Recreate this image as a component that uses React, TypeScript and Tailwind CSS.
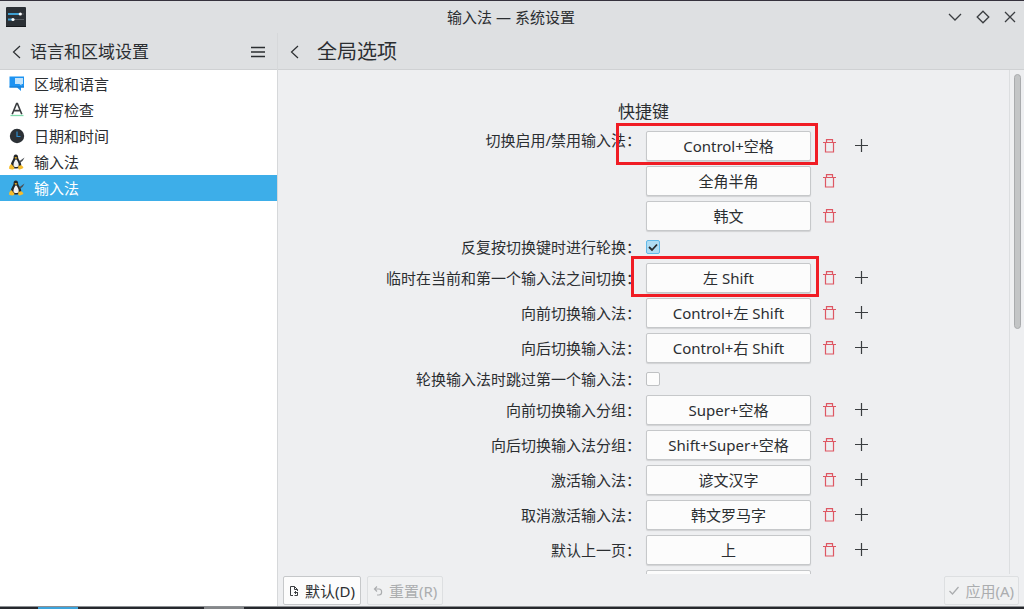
import { useState } from "react";

type Row =
  | { kind: "keys"; id: string; label: string; keys: string[]; highlight?: "wide" | "narrow" }
  | { kind: "check"; id: string; label: string; checked: boolean };

const rows: Row[] = [
  { kind: "keys", id: "toggle", label: "切换启用/禁用输入法：", keys: ["Control+空格", "全角半角", "韩文"], highlight: "wide" },
  { kind: "check", id: "cycle", label: "反复按切换键时进行轮换：", checked: true },
  { kind: "keys", id: "temp", label: "临时在当前和第一个输入法之间切换：", keys: ["左 Shift"], highlight: "narrow" },
  { kind: "keys", id: "forward", label: "向前切换输入法：", keys: ["Control+左 Shift"] },
  { kind: "keys", id: "backward", label: "向后切换输入法：", keys: ["Control+右 Shift"] },
  { kind: "check", id: "skip", label: "轮换输入法时跳过第一个输入法：", checked: false },
  { kind: "keys", id: "group-forward", label: "向前切换输入分组：", keys: ["Super+空格"] },
  { kind: "keys", id: "group-backward", label: "向后切换输入法分组：", keys: ["Shift+Super+空格"] },
  { kind: "keys", id: "activate", label: "激活输入法：", keys: ["谚文汉字"] },
  { kind: "keys", id: "deactivate", label: "取消激活输入法：", keys: ["韩文罗马字"] },
  { kind: "keys", id: "prev-page", label: "默认上一页：", keys: ["上"] },
];

const highlights = {
  wide: "-left-[30px] -right-[7px] -top-[8px] -bottom-[4px]",
  narrow: "-left-[15px] -right-[8px] -top-[7px] -bottom-[4px]",
};

function AppIcon() {
  return (
    <svg className="w-5 h-5" viewBox="0 0 20 20">
      <rect width="20" height="20" rx="1" fill="#2b3035" />
      <path d="M0 19.5h20" stroke="#17191c" />
      <path d="M2 7h12" stroke="#3f9fd0" strokeWidth="2" />
      <path d="M14 7h4" stroke="#565b60" strokeWidth="1" />
      <path d="M2 12.5h5" stroke="#3f9fd0" strokeWidth="2" />
      <path d="M7 12.5h11" stroke="#565b60" strokeWidth="1" />
      <circle cx="14.3" cy="7" r="1.6" fill="#fff" />
      <circle cx="7" cy="12.5" r="1.6" fill="#fff" />
    </svg>
  );
}

function ChevronLeft() {
  return (
    <svg className="w-[9px] h-[14px]" viewBox="0 0 9 14" fill="none" stroke="currentColor" strokeWidth="1.2">
      <path d="M8 1L1.5 7L8 13" />
    </svg>
  );
}

function LanguageIcon() {
  return (
    <svg className="w-4 h-4" viewBox="0 0 16 16">
      <path d="M.5 .5h14.500v11H12V15l-4-3.500H.5z" fill="#1d93f2" />
      <path d="M.5 10.500h14.500v1H.5z" fill="#1477cc" />
      <path d="M6 2h8v6h-1.500v1.500l-2-1.500H6z" fill="#c4e4fb" />
    </svg>
  );
}

function SpellIcon() {
  return (
    <svg className="w-4 h-4" viewBox="0 0 16 16" fill="none">
      <path d="M3.200 12.300L7.600 1.500h.8l4.400 10.800M5 8.600h6" stroke="#3a3d40" strokeWidth="1.600" />
      <path d="M1.500 13.500h13" stroke="#7fdcab" strokeWidth="1.300" />
    </svg>
  );
}

function ClockIcon() {
  return (
    <svg className="w-4 h-4" viewBox="0 0 16 16" fill="none">
      <circle cx="8" cy="8" r="7.200" fill="#2c3136" />
      <path d="M8 3.500v5h3.500" stroke="#2f8ccb" strokeWidth="1.200" />
    </svg>
  );
}

function TuxIcon() {
  return (
    <svg className="w-4 h-4" viewBox="0 0 16 16">
      <path d="M6.800 .5C5 .5 4.500 2 4.600 3.800C4.400 5.500 1.800 8 1.800 11.500C2.500 14 5 14.500 7.500 14.500S12.300 13.500 12.300 11C12.300 8 9.500 5.800 9.200 4C9.200 2 8.600 .5 6.800 .5z" fill="#25282b" />
      <path d="M6.500 5.500C5.500 7 4.300 9 4.500 11.500C5 13.500 9.300 13.500 9.700 11.500C10 9 8.500 7 7.500 5.500z" fill="#f4f4f4" />
      <path d="M5.500 3.600l1.400-.5l1.500.6l-1.500 1.400z" fill="#f0b429" />
      <path d="M2.200 10l3 3.300c.6 1.200-.3 2.500-2 2.200L.5 15c-.7-.4-.3-1.500-.2-2.500c.2-.8 1-1.300 1.900-2.500z" fill="#f6bd2d" />
      <path d="M9.300 11.300c.8.600 2 .5 2.700-.4l2.300 2c.5.800-1 1.500-2.200 2.200c-1 .6-2.700.4-2.900-.7z" fill="#f6bd2d" />
      <path d="M10 7.500l2-1.500l3.500-2.500l-1.800 3.200l-2.500 2z" fill="#4c5055" />
    </svg>
  );
}

function TrashIcon() {
  return (
    <svg className="w-[13px] h-[14px]" viewBox="0 0 13 14" fill="none" stroke="#de5763" strokeWidth="1.200">
      <path d="M0 3.500h13M3.500 3.500V.6h6v2.900M2.500 3.500v9.500h8V3.500" />
    </svg>
  );
}

function PlusIcon() {
  return (
    <svg className="w-[13px] h-[13px]" viewBox="0 0 13 13" stroke="#3a3d40" strokeWidth="1.200">
      <path d="M0 6.500h13M6.500 0v13" />
    </svg>
  );
}

const sections = [
  { name: "区域和语言", Icon: LanguageIcon },
  { name: "拼写检查", Icon: SpellIcon },
  { name: "日期和时间", Icon: ClockIcon },
  { name: "输入法", Icon: TuxIcon },
  { name: "输入法", Icon: TuxIcon },
];

function Sidebar() {
  const [active, setActive] = useState(4);

  return (
    <aside className="w-[278px] shrink-0 flex flex-col bg-white border-r border-[#d6d8da]">
      <div className="h-[37px] shrink-0 flex items-center pt-[2px] px-3 bg-[#dee0e2] border-b border-[#cfd1d3]">
        <button aria-label="返回"><ChevronLeft /></button>
        <h2 className="flex-1 pl-[9px] text-[17px] leading-5">语言和区域设置</h2>
        <button aria-label="菜单">
          <svg className="w-[14px] h-[12px]" viewBox="0 0 14 12" stroke="currentColor" strokeWidth="1.500">
            <path d="M0 1.500h14M0 6h14M0 10.500h14" />
          </svg>
        </button>
      </div>
      <nav className="flex flex-col pt-px">
        {sections.map(({ name, Icon }, i) => (
          <button
            key={i}
            onClick={() => setActive(i)}
            className={`flex items-center gap-[9px] h-[26px] pl-[9px] text-left ${active === i ? "bg-[#3daee9] text-white" : ""}`}
          >
            <Icon />
            <span>{name}</span>
          </button>
        ))}
      </nav>
    </aside>
  );
}

function KeyRow({ row }: { row: Extract<Row, { kind: "keys" }> }) {
  return (
    <>
      <label
        htmlFor={row.id}
        className={row.keys.length > 1 ? "self-start text-right leading-[18px]" : "self-center text-right"}
      >
        {row.label}
      </label>
      <div className="flex flex-col gap-[5px]">
        {row.keys.map((key, i) => (
          <div key={key} className="flex items-center">
            <div className="relative">
              <button
                id={i === 0 ? row.id : undefined}
                className="block w-[165px] h-[30px] bg-[#fcfcfc] border border-[#c6c8ca] rounded-xs shadow-[0_1px_1px_rgba(0,0,0,0.12)]"
              >
                {key}
              </button>
              {i === 0 && row.highlight && (
                <div className={`absolute border-3 border-[#f01c24] pointer-events-none ${highlights[row.highlight]}`} />
              )}
            </div>
            <button aria-label="删除" className="ml-3"><TrashIcon /></button>
            {i === 0 && <button aria-label="添加" className="ml-[19px] pb-[2px]"><PlusIcon /></button>}
          </div>
        ))}
      </div>
    </>
  );
}

function CheckRow({ row }: { row: Extract<Row, { kind: "check" }> }) {
  return (
    <>
      <label htmlFor={row.id} className="h-[22px] flex items-center justify-end">{row.label}</label>
      <div className="flex items-center">
        <div className="relative w-[14px] h-[14px]">
          <input
            id={row.id}
            type="checkbox"
            defaultChecked={row.checked}
            className="peer appearance-none block w-[14px] h-[14px] rounded-xs border border-[#bfc1c3] bg-[#fcfcfc] checked:bg-[#b0dcf3] checked:border-[#62b9e8]"
          />
          <svg className="absolute inset-0 w-[14px] h-[14px] hidden peer-checked:block pointer-events-none" viewBox="0 0 14 14" fill="none" stroke="#26292c" strokeWidth="1.800">
            <path d="M3 7l3 3l5-5.500" />
          </svg>
        </div>
      </div>
    </>
  );
}

export default function App() {
  return (
    <div className="h-screen flex flex-col bg-[#eeeff1] text-[#2b2e31] text-[15px] leading-5 font-['Noto_Sans','Noto_Sans_CJK_SC',sans-serif] border-t border-[#35323d] overflow-hidden">
      {/* Title bar */}
      <header className="h-8 shrink-0 grid grid-cols-[1fr_auto_1fr] items-center pl-[6px] pr-2 bg-[#dee0e2]">
        <AppIcon />
        <h1>输入法 — 系统设置</h1>
        <div className="flex items-center justify-end gap-[14px]">
          <button aria-label="最小化">
            <svg className="w-[14px] h-[14px]" viewBox="0 0 14 14" fill="none" stroke="#3a3d40" strokeWidth="1.300">
              <path d="M1 4l6 6l6-6" />
            </svg>
          </button>
          <button aria-label="最大化">
            <svg className="w-[14px] h-[14px]" viewBox="0 0 14 14" fill="none" stroke="#3a3d40" strokeWidth="1.300">
              <path d="M7 1.200l5.800 5.800l-5.800 5.800l-5.800-5.800z" />
            </svg>
          </button>
          <button aria-label="关闭">
            <svg className="w-[12px] h-[14px]" viewBox="0 0 12 14" fill="none" stroke="#3a3d40" strokeWidth="1.300">
              <path d="M1 2l10 10M11 2L1 12" />
            </svg>
          </button>
        </div>
      </header>

      <div className="flex-1 min-h-0 flex">
        <Sidebar />

        <main className="flex-1 min-w-0 flex flex-col">
          <div className="h-[37px] shrink-0 flex items-center gap-[18px] pt-[2px] pl-3 bg-[#dee0e2] border-b border-[#cfd1d3]">
            <button aria-label="返回"><ChevronLeft /></button>
            <h2 className="text-[20px] leading-6">全局选项</h2>
          </div>

          <div className="flex-1 min-h-0 flex">
            <div className="flex-1 min-w-0 overflow-hidden pt-8">
              <h3 className="text-center text-[17px] leading-5 mb-[9px]">快捷键</h3>
              <div className="grid grid-cols-2 gap-[5px]">
                {rows.map((row) =>
                  row.kind === "keys" ? <KeyRow key={row.id} row={row} /> : <CheckRow key={row.id} row={row} />
                )}
                {/* next entry, scrolled out of view */}
                <button
                  aria-label="默认下一页"
                  className="col-start-2 w-[165px] h-[30px] bg-[#fcfcfc] border border-[#c6c8ca] rounded-xs"
                />
              </div>
            </div>
            <div className="w-[15px] shrink-0 border-l border-[#dcdee0] pt-1 pl-1">
              <div className="w-[7px] h-[51%] rounded-full bg-[#c3c5c6] border border-[#a9abad]" />
            </div>
          </div>

          {/* Footer */}
          <footer className="h-8 shrink-0 flex items-start gap-[6px] pt-[2px] px-[5px]">
            <button className="h-[29px] px-[5px] flex items-center gap-[6px] bg-[#fcfcfc] border border-[#c6c8ca] rounded-xs">
              <svg className="w-[10px] h-[12px]" viewBox="0 0 10 12" fill="none" stroke="#3a3d40">
                <path d="M4 10.500H1.500v-9h4l3 3v1.500M5.500 1.500v3h3" />
                <path d="M9 7.500H5.500M7 6L5.500 7.500L7 9M8.500 7.500v3h-3" />
              </svg>
              默认(D)
            </button>
            <button disabled className="h-[29px] px-[5px] flex items-center gap-[6px] bg-[#f0f1f2] border border-[#dddfe1] rounded-xs text-[#abadaf]">
              <svg className="w-[10px] h-[10px]" viewBox="0 0 10 10" fill="none" stroke="currentColor" strokeWidth="1.200">
                <path d="M4 .5L1.500 3l2.500 2.500M1.500 3h4.500c3.500 0 3.500 6 0 6H4" />
              </svg>
              重置(R)
            </button>
            <button disabled className="ml-auto h-[29px] px-1 flex items-center gap-[6px] bg-[#f0f1f2] border border-[#dddfe1] rounded-xs text-[#abadaf]">
              <svg className="w-[10px] h-[9px]" viewBox="0 0 10 9" fill="none" stroke="currentColor" strokeWidth="1.300">
                <path d="M.5 5l3 3l6-7" />
              </svg>
              应用(A)
            </button>
          </footer>
        </main>
      </div>

      {/* Top edge of the desktop panel */}
      <div className="h-[3px] shrink-0 flex bg-[#26282d] border-t border-[#8d9093]">
        <div className="w-10 ml-[38px] bg-[#3da4dc]" />
        <div className="w-10 ml-[126px] bg-[#85878a]" />
      </div>
    </div>
  );
}
